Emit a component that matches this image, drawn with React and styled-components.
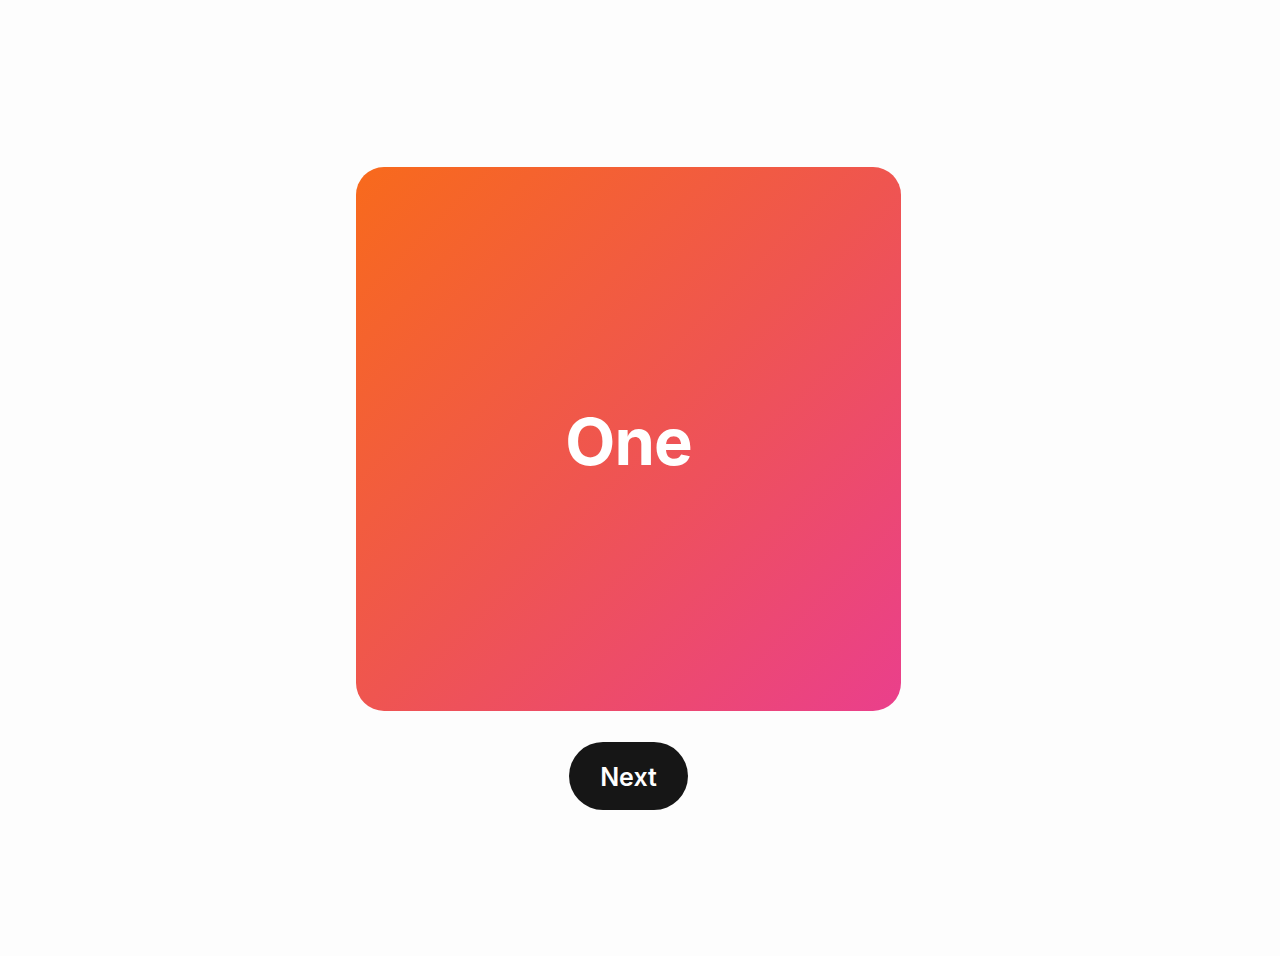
import React, { useState } from 'react';
import styled, { createGlobalStyle } from 'styled-components';

const GlobalStyle = createGlobalStyle`
    html, body {
        margin: 0;
        padding: 0;
        background: #fdfdfd;
        font-family: Inter, "Liberation Sans", Arial, sans-serif;
    }
`

const slides = ['One', 'Two', 'Three'];

const Page = styled.div`
    min-height: 100vh;
    box-sizing: border-box;
    display: flex;
    flex-direction: column;
    align-items: center;
    justify-content: center;
    gap: 31px;
    padding: 21px 23px 0 0;
`

const Card = styled.div`
    width: 545px;
    height: 544px;
    border-radius: 28px;
    background-image: linear-gradient(135deg, #f86a1c 0%, #ef5550 50%, #ea3f8c 100%);
    display: flex;
    align-items: center;
    justify-content: center;
    padding-top: 4px;
    box-sizing: border-box;
    color: #ffffff;
    font-size: 65px;
    font-weight: 700;
    letter-spacing: -1px;
`

const NextButton = styled.button`
    height: 68px;
    padding: 2px 31px 0;
    border: none;
    border-radius: 34px;
    background: #161616;
    color: #ffffff;
    font-family: inherit;
    font-size: 25px;
    font-weight: 600;
    cursor: pointer;
`

export default function App() {
    const [index, setIndex] = useState(0);

    return (
        <>
            <GlobalStyle />
            <Page>
                <Card>{slides[index]}</Card>
                <NextButton onClick={() => setIndex((index + 1) % slides.length)}>
                    Next
                </NextButton>
            </Page>
        </>
    );
}
